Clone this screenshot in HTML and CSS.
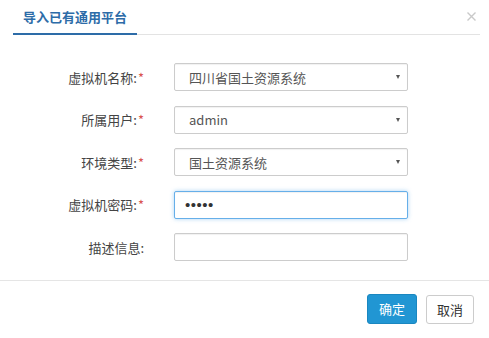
FILE: index.html
```html
<!DOCTYPE html>
<html lang="zh-CN">
<head>
<meta charset="utf-8">
<title>导入已有通用平台</title>
<link rel="stylesheet" href="styles.css">
</head>
<body>
<div class="modal">
  <div class="modal-header">
    <div class="tab">导入已有通用平台</div>
    <span class="close" aria-label="关闭">
      <svg width="9" height="9" viewBox="0 0 9 9"><path d="M0.5 0.5 L8.5 8.5 M8.5 0.5 L0.5 8.5" stroke="#c9c9c9" stroke-width="1.4" fill="none"/></svg>
    </span>
  </div>
  <form class="form">
    <div class="row">
      <label class="label">虚拟机名称:<span class="req">*</span></label>
      <div class="select-wrap"><select class="control"><option>四川省国土资源系统</option></select></div>
    </div>
    <div class="row">
      <label class="label">所属用户:<span class="req">*</span></label>
      <div class="select-wrap"><select class="control"><option>admin</option></select></div>
    </div>
    <div class="row">
      <label class="label">环境类型:<span class="req">*</span></label>
      <div class="select-wrap"><select class="control"><option>国土资源系统</option></select></div>
    </div>
    <div class="row">
      <label class="label">虚拟机密码:<span class="req">*</span></label>
      <input class="control focus" type="password" value="12345">
    </div>
    <div class="row">
      <label class="label">描述信息:</label>
      <input class="control" type="text" value="">
    </div>
  </form>
  <div class="modal-footer">
    <button class="btn btn-primary" type="button">确定</button>
    <button class="btn btn-default" type="button">取消</button>
  </div>
</div>
</body>
</html>
```
FILE: styles.css
```css
* { box-sizing: border-box; }
html, body {
  margin: 0;
  padding: 0;
  background: #fff;
}
body {
  font-family: "Noto Sans CJK SC", "Open Sans", sans-serif;
  font-size: 13px;
  color: #444;
  width: 489px;
  height: 338px;
  overflow: hidden;
}
.modal {
  width: 489px;
  height: 338px;
  background: #fff;
}
.modal-header {
  margin: 0 9px 0 13px;
  height: 35px;
  border-bottom: 1px solid #e3e3e3;
  display: flex;
  justify-content: space-between;
  align-items: flex-start;
}
.tab {
  padding: 0 10px;
  height: 35px;
  line-height: 33px;
  font-size: 13px;
  font-weight: bold;
  color: #2d6ca8;
  border-bottom: 2px solid #2d6ca8;
  margin-bottom: -1px;
}
.close {
  display: block;
  margin: 12px 4px 0 0;
  width: 9px;
  height: 9px;
  line-height: 0;
}
.form {
  padding-top: 28px;
  display: flex;
  flex-direction: column;
  gap: 14.5px;
  margin: 0;
}
.row {
  display: flex;
  align-items: center;
  height: 28px;
}
.label {
  width: 144px;
  text-align: right;
  color: #444;
  font-size: 13px;
  margin-right: 30px;
}
.req {
  color: #d9534f;
  margin-left: 1px;
}
.select-wrap {
  position: relative;
  width: 234px;
  height: 28px;
}
.select-wrap::after {
  content: "";
  position: absolute;
  right: 8px;
  top: 12px;
  border-left: 2.5px solid transparent;
  border-right: 2.5px solid transparent;
  border-top: 4px solid #555;
  pointer-events: none;
}
.control {
  width: 234px;
  height: 28px;
  border: 1px solid #ccc;
  border-radius: 2px;
  background: #fff;
  font-family: "Noto Sans CJK SC", "Open Sans", sans-serif;
  font-size: 13px;
  color: #555;
  padding: 0 14px;
  margin: 0;
  outline: none;
  appearance: none;
  -webkit-appearance: none;
  box-shadow: inset 0 1px 1px rgba(0,0,0,0.06);
}
.control.focus {
  border-color: #66afe9;
  box-shadow: inset 0 1px 1px rgba(0,0,0,0.06), 0 0 4px rgba(102,175,233,0.55);
  font-family: "Liberation Sans", sans-serif;
  font-size: 15px;
  letter-spacing: 0.5px;
  padding-left: 10px;
  color: #333;
}
.modal-footer {
  margin-top: 19px;
  border-top: 1px solid #e5e5e5;
  padding: 13px 15px 0 0;
  display: flex;
  justify-content: flex-end;
  gap: 9px;
}
.btn {
  height: 30px;
  padding: 0 10px;
  font-family: "Noto Sans CJK SC", "Open Sans", sans-serif;
  font-size: 13px;
  border-radius: 3px;
  cursor: pointer;
  line-height: 28px;
}
.btn-primary {
  width: 50px;
  background: #2196d3;
  border: 1px solid #1a87c0;
  color: #fff;
}
.btn-default {
  width: 48px;
  height: 29px;
  background: #fff;
  border: 1px solid #ccc;
  color: #333;
  margin-top: 1px;
}
```
